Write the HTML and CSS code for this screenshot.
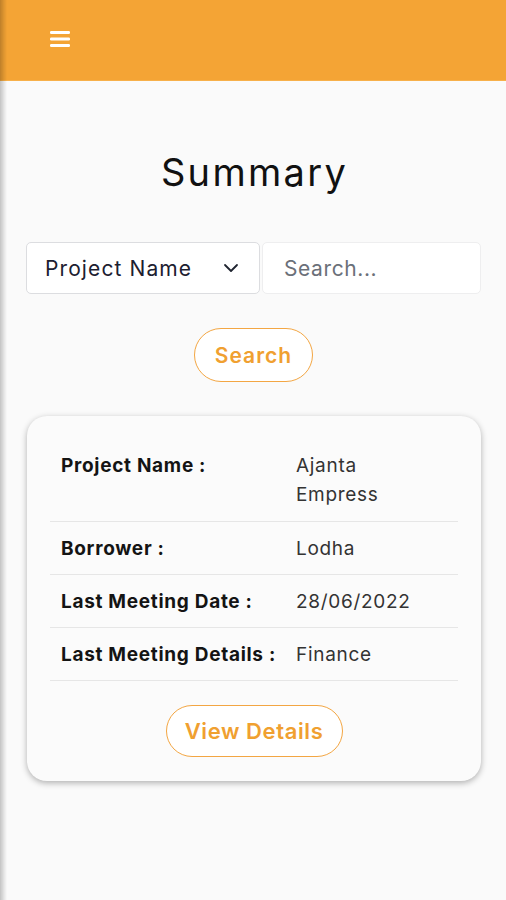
FILE: index.html
```html
<!DOCTYPE html>
<html lang="en">
<head>
<meta charset="utf-8">
<title>Summary</title>
<link rel="stylesheet" href="styles.css">
</head>
<body>
<div class="edge-shadow"></div>
<header class="topbar">
  <button class="menu-btn" aria-label="Menu">
    <svg width="20" height="18" viewBox="0 0 20 18"><rect x="0" y="1" width="20" height="3" rx="1.2" fill="#fff"/><rect x="0" y="7.5" width="20" height="3" rx="1.2" fill="#fff"/><rect x="0" y="14" width="20" height="3" rx="1.2" fill="#fff"/></svg>
  </button>
</header>
<main class="content">
  <h1 class="title">Summary</h1>
  <div class="filters">
    <div class="select">
      <span class="select-label">Project Name</span>
      <svg class="chev" width="16" height="10" viewBox="0 0 16 10"><path d="M2 2 L8 8 L14 2" fill="none" stroke="#1f2430" stroke-width="1.8" stroke-linecap="round" stroke-linejoin="round"/></svg>
    </div>
    <div class="input"><span class="placeholder">Search...</span></div>
  </div>
  <div class="btn-row"><button class="pill search-btn">Search</button></div>
  <section class="card">
    <div class="row">
      <div class="label">Project Name :</div>
      <div class="value narrow">Ajanta Empress</div>
    </div>
    <div class="row">
      <div class="label">Borrower :</div>
      <div class="value">Lodha</div>
    </div>
    <div class="row">
      <div class="label">Last Meeting Date :</div>
      <div class="value">28/06/2022</div>
    </div>
    <div class="row">
      <div class="label">Last Meeting Details :</div>
      <div class="value">Finance</div>
    </div>
    <div class="btn-row card-btn-row"><button class="pill details-btn">View Details</button></div>
  </section>
</main>
</body>
</html>
```
FILE: styles.css
```css
* { box-sizing: border-box; }
html, body { margin: 0; padding: 0; }
body {
  background: #fafafa;
  font-family: "Inter", "Noto Sans", sans-serif;
  color: #222;
  width: 506px;
  min-height: 900px;
}
.edge-shadow {
  position: fixed;
  left: 0; top: 0; bottom: 0;
  width: 7px;
  background: linear-gradient(to right, rgba(0,0,0,0.22), rgba(0,0,0,0.08) 60%, rgba(0,0,0,0));
  z-index: 10;
}
.topbar {
  height: 81px;
  background: #f4a435;
  border-bottom: 1px solid #f7b04a;
  display: flex;
  align-items: center;
  padding-left: 50px;
}
.menu-btn {
  background: none; border: 0; padding: 0; margin-top: -2px;
  display: flex;
}
.content {
  padding: 0 25px 0 26px;
}
.title {
  margin: 66px 0 0;
  text-align: center;
  font-weight: 400;
  font-size: 38px;
  line-height: 50px;
  color: #111;
  letter-spacing: 2.3px;
  padding-left: 2px;
}
.filters {
  display: flex;
  gap: 2px;
  margin-top: 45px;
}
.select {
  width: 234px;
  height: 52px;
  background: #fff;
  border: 1px solid #dcdde0;
  border-radius: 5px;
  display: flex;
  align-items: center;
  justify-content: space-between;
  padding: 0 20px 0 18px;
}
.select-label { font-size: 21px; color: #1c2030; letter-spacing: 1.1px; }
.input {
  flex: 1;
  height: 52px;
  background: #fff;
  border: 1px solid #eeeeef;
  border-radius: 5px;
  display: flex;
  align-items: center;
  padding-left: 21px;
}
.placeholder { font-size: 21px; color: #6b7079; letter-spacing: 0.6px; }
.btn-row { display: flex; justify-content: center; }
.pill {
  font-family: inherit;
  font-weight: 600;
  color: #f0a030;
  background: #fff;
  border: 1px solid #f3a643;
  cursor: pointer;
  padding: 0;
}
.search-btn {
  margin-top: 34px;
  width: 119px;
  height: 54px;
  border-radius: 27px;
  font-size: 21px;
  letter-spacing: 1px;
}
.card {
  margin: 34px 0 0 1px;
  background: #fbfbfb;
  border-radius: 20px;
  box-shadow: 0 2px 6px rgba(0,0,0,0.3);
  padding: 23px 23px 24px;
}
.row {
  display: grid;
  grid-template-columns: 235px 1fr;
  padding: 12px 11px 12px;
  border-bottom: 1px solid #e6e6e6;
  font-size: 19px;
  line-height: 29px;
  letter-spacing: 0.7px;
}
.row + .row { padding-top: 12px; padding-bottom: 11px; }
.label { font-weight: 700; color: #141414; white-space: nowrap; }
.value { color: #333; }
.value.narrow { max-width: 130px; }
.card-btn-row { margin-top: 24px; }
.details-btn {
  width: 177px;
  height: 52px;
  border-radius: 26px;
  font-size: 22px;
  letter-spacing: 0.6px;
}
```
